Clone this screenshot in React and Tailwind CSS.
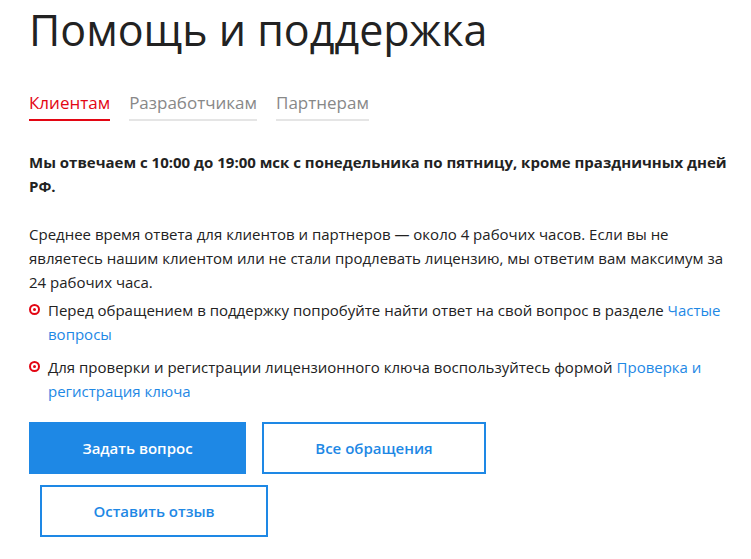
import React from "react";

function Bullet() {
  return (
    <span className="mt-[6px] mr-[8px] flex h-[11px] w-[11px] shrink-0 items-center justify-center rounded-full border-[2px] border-[#e30613]">
      <span className="h-[3px] w-[3px] rounded-full bg-[#e30613]" />
    </span>
  );
}

export default function App() {
  return (
    <div className="min-h-[559px] w-[751px] bg-white pl-[29px] text-[#222] [font-family:'Open_Sans',sans-serif]">
      <h1 className="pt-[2px] text-[43px] font-normal leading-[56px] text-[#222]">Помощь и поддержка</h1>
      <div className="mt-[33px] flex gap-[19px] text-[17px] leading-[23px]">
        <div className="border-b-[2px] border-[#e30613] pb-[5px] text-[#e30613]">Клиентам</div>
        <div className="border-b-[2px] border-[#e5e5e5] pb-[5px] text-[#888]">Разработчикам</div>
        <div className="border-b-[2px] border-[#e5e5e5] pb-[5px] text-[#888]">Партнерам</div>
      </div>
      <p className="mt-[29px] w-[700px] text-[15px] font-bold leading-[24px]">
        Мы отвечаем с 10:00 до 19:00 мск с понедельника по пятницу, кроме праздничных дней РФ.
      </p>
      <p className="mt-[24px] w-[706px] text-[15px] leading-[24px]">
        Среднее время ответа для клиентов и партнеров — около 4 рабочих часов. Если вы не являетесь нашим клиентом или не стали продлевать лицензию, мы ответим вам максимум за 24 рабочих часа.
      </p>
      <ul className="mt-[4px] flex w-[700px] flex-col gap-[9px] text-[15px] leading-[24px]">
        <li className="flex">
          <Bullet />
          <span>
            Перед обращением в поддержку попробуйте найти ответ на свой вопрос в разделе{" "}
            <a className="text-[#1e88e5]">Частые вопросы</a>
          </span>
        </li>
        <li className="flex">
          <Bullet />
          <span>
            Для проверки и регистрации лицензионного ключа воспользуйтесь формой{" "}
            <a className="text-[#1e88e5]">Проверка и регистрация ключа</a>
          </span>
        </li>
      </ul>
      <div className="mt-[19px] flex w-[470px] flex-wrap gap-x-[16px] gap-y-[11px] text-[15px] font-semibold">
        <button className="h-[52px] w-[217px] bg-[#1e88e5] text-white">Задать вопрос</button>
        <button className="h-[52px] w-[224px] border-[2px] border-[#1e88e5] bg-white text-[#1e88e5]">Все обращения</button>
        <button className="ml-[11px] h-[52px] w-[228px] border-[2px] border-[#1e88e5] bg-white text-[#1e88e5]">Оставить отзыв</button>
      </div>
    </div>
  );
}
